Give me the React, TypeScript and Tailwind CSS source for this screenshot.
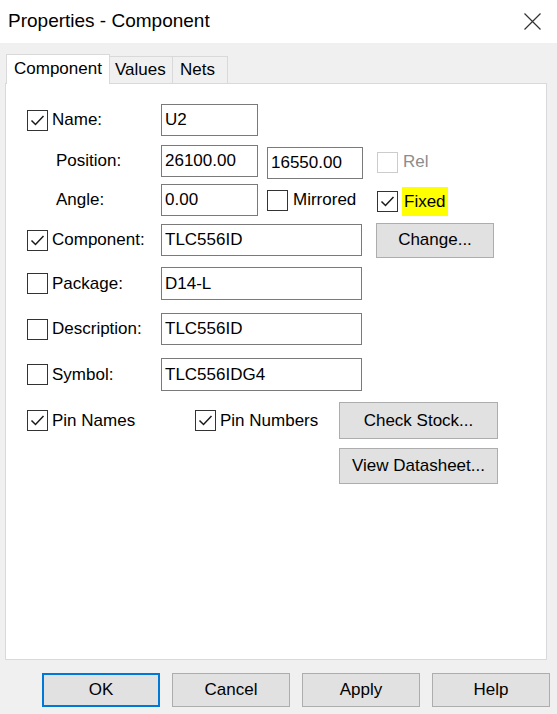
import React from "react";

const font = { fontFamily: '"Liberation Sans", Arial, sans-serif' };

function Check({ checked, disabled }: { checked?: boolean; disabled?: boolean }) {
  return (
    <div
      className={
        "w-[21px] h-[21px] shrink-0 border bg-white flex items-center justify-center " +
        (disabled ? "border-[#cccccc]" : "border-[#333333]")
      }
    >
      {checked && (
        <svg width="19" height="19" viewBox="0 0 19 19">
          <polyline points="3.5,9.5 7.5,13.5 15.5,5" fill="none" stroke="#1a1a1a" strokeWidth="1.5" />
        </svg>
      )}
    </div>
  );
}

function Field({ w, text }: { w: string; text: string }) {
  return (
    <div className={"h-[32px] border border-[#7a7a7a] bg-white flex items-center pl-[3px] text-[17px] text-black " + w}>
      {text}
    </div>
  );
}

function Btn({ label, w, primary }: { label: string; w: string; primary?: boolean }) {
  return (
    <div
      className={
        "flex items-center justify-center bg-[#e1e1e1] text-[17px] text-black " +
        w +
        (primary ? " border-2 border-[#0078d7]" : " border border-[#adadad]")
      }
    >
      {label}
    </div>
  );
}

export default function App() {
  return (
    <div className="w-[557px] h-[714px] flex flex-col bg-[#f0f0f0] overflow-hidden" style={font}>
      {/* title bar */}
      <div className="h-[43px] bg-white flex items-center justify-between shrink-0">
        <span className="pl-[8px] text-[19px] text-black">Properties - Component</span>
        <svg className="mr-[16px]" width="17" height="17" viewBox="0 0 17 17">
          <path d="M0.5 0.5 L16.5 16.5 M16.5 0.5 L0.5 16.5" stroke="#333" strokeWidth="1.2" />
        </svg>
      </div>

      {/* tabs */}
      <div className="pt-[11px] pl-[6px] flex items-end text-[17px] text-black">
        <div className="relative z-10 -mb-px h-[30px] w-[104px] bg-white border-l border-t border-r border-[#d9d9d9] flex items-center pl-[7px] pb-[2px]">
          Component
        </div>
        <div className="h-[27px] w-[63px] bg-[#f0f0f0] border-t border-r border-[#d9d9d9] flex items-center pl-[5px]">
          Values
        </div>
        <div className="h-[27px] w-[55px] bg-[#f0f0f0] border-t border-r border-[#d9d9d9] flex items-center pl-[7px]">
          Nets
        </div>
      </div>

      {/* panel */}
      <div className="ml-[5px] w-[542px] h-[577px] bg-white border border-[#d9d9d9] flex flex-col text-[17px] text-black">
        {/* Name */}
        <div className="mt-[20px] h-[32px] flex items-center">
          <div className="w-[155px] pl-[21px] flex items-center gap-[4px]">
            <Check checked />
            <span>Name:</span>
          </div>
          <Field w="w-[97px]" text="U2" />
        </div>

        {/* Position */}
        <div className="mt-[9px] h-[32px] flex items-center">
          <div className="w-[155px] pl-[50px]">Position:</div>
          <Field w="w-[97px]" text="26100.00" />
          <div className="ml-[9px] mt-[4px]">
            <Field w="w-[96px]" text="16550.00" />
          </div>
          <div className="ml-[14px] flex items-center gap-[5px] mt-[2px]">
            <Check disabled />
            <span className="text-[#8c8c8c]">Rel</span>
          </div>
        </div>

        {/* Angle */}
        <div className="mt-[7px] h-[32px] flex items-center">
          <div className="w-[155px] pl-[50px]">Angle:</div>
          <Field w="w-[97px]" text="0.00" />
          <div className="ml-[9px] w-[110px] flex items-center gap-[5px]">
            <Check />
            <span>Mirrored</span>
          </div>
          <div className="flex items-center gap-[4px] mt-[3px]">
            <Check checked />
            <span className="bg-[#ffff00] h-[29px] flex items-center px-[2px]">Fixed</span>
          </div>
        </div>

        {/* Component */}
        <div className="mt-[8px] h-[32px] flex items-center">
          <div className="w-[155px] pl-[21px] flex items-center gap-[4px]">
            <Check checked />
            <span>Component:</span>
          </div>
          <Field w="w-[201px]" text="TLC556ID" />
          <div className="ml-[14px]">
            <Btn label="Change..." w="w-[118px] h-[35px]" />
          </div>
        </div>

        {/* Package */}
        <div className="mt-[11px] h-[33px] flex items-center">
          <div className="w-[155px] pl-[21px] flex items-center gap-[4px]">
            <Check />
            <span>Package:</span>
          </div>
          <Field w="w-[201px] h-[33px]" text="D14-L" />
        </div>

        {/* Description */}
        <div className="mt-[13px] h-[32px] flex items-center">
          <div className="w-[155px] pl-[21px] flex items-center gap-[4px]">
            <Check />
            <span>Description:</span>
          </div>
          <Field w="w-[201px]" text="TLC556ID" />
        </div>

        {/* Symbol */}
        <div className="mt-[13px] h-[33px] flex items-center">
          <div className="w-[155px] pl-[21px] flex items-center gap-[4px]">
            <Check />
            <span>Symbol:</span>
          </div>
          <Field w="w-[201px] h-[33px]" text="TLC556IDG4" />
        </div>

        {/* Pins */}
        <div className="mt-[11px] h-[37px] flex items-center">
          <div className="w-[189px] pl-[21px] flex items-center gap-[4px]">
            <Check checked />
            <span>Pin Names</span>
          </div>
          <div className="w-[144px] flex items-center gap-[4px]">
            <Check checked />
            <span>Pin Numbers</span>
          </div>
          <Btn label="Check Stock..." w="w-[159px] h-[37px]" />
        </div>

        {/* Datasheet */}
        <div className="mt-[9px] h-[36px] flex items-center pl-[333px]">
          <Btn label="View Datasheet..." w="w-[159px] h-[36px]" />
        </div>
      </div>

      {/* bottom buttons */}
      <div className="mt-[13px] pl-[42px] flex gap-[12px]">
        <Btn label="OK" w="w-[118px] h-[34px]" primary />
        <Btn label="Cancel" w="w-[118px] h-[34px]" />
        <Btn label="Apply" w="w-[118px] h-[34px]" />
        <Btn label="Help" w="w-[118px] h-[34px]" />
      </div>
    </div>
  );
}
